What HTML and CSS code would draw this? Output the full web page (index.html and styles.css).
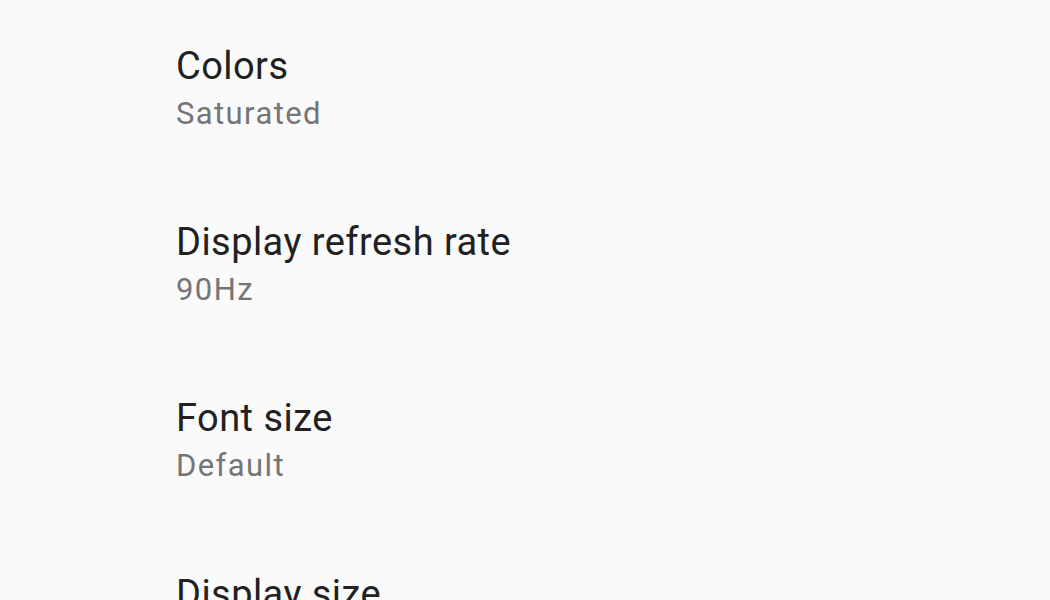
FILE: index.html
```html
<!DOCTYPE html>
<html>
	<head>
		<link rel="stylesheet" href="styles.css">
	</head>
	<body>
		<main class="list">
			<div class="item">
				<div class="title">Colors</div>
				<div class="summary">Saturated</div>
			</div>
			<div class="item">
				<div class="title">Display refresh rate</div>
				<div class="summary">90Hz</div>
			</div>
			<div class="item">
				<div class="title">Font size</div>
				<div class="summary">Default</div>
			</div>
			<div class="item">
				<div class="title">Display size</div>
				<div class="summary">Default</div>
			</div>
		</main>
	</body>
</html>
```

FILE: styles.css
```css
body {
	margin: 0;
	padding: 0;
	overflow: hidden;
	height: 100vh;
	font-family: Roboto, "Liberation Sans", sans-serif;
	background-color: #fafafa;
}
.list {
	display: flex;
	flex-direction: column;
	padding-left: 176px;
}
.item {
	display: flex;
	flex-direction: column;
	gap: 4px;
	padding: 42px 0 42px;
}
.title {
	font-size: 38px;
	line-height: 48px;
	letter-spacing: 0.45px;
	color: #212121;
}
.summary {
	font-size: 31px;
	line-height: 40px;
	letter-spacing: 1.4px;
	color: #757575;
}
```
